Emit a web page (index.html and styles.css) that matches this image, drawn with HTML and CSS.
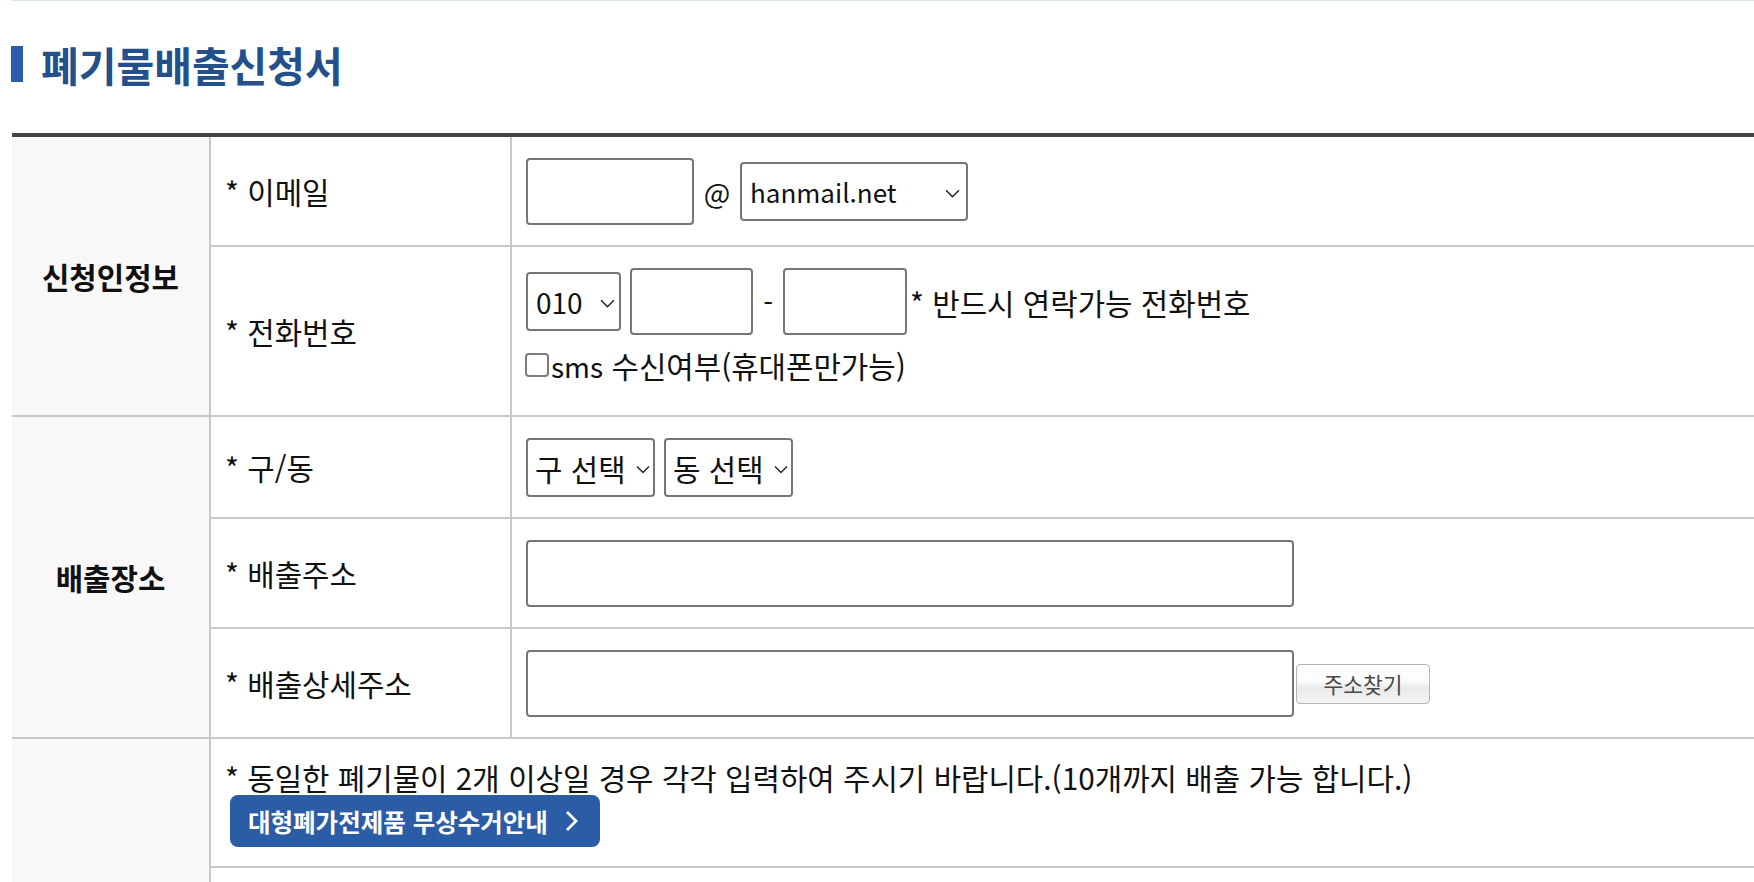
FILE: index.html
```html
<!DOCTYPE html>
<html lang="ko">
<head>
<meta charset="utf-8">
<title>폐기물배출신청서</title>
<link rel="stylesheet" href="styles.css">
</head>
<body>
<div class="page">
  <div class="topline"></div>
  <h2 class="title"><span class="bar"></span>폐기물배출신청서</h2>
  <table class="form">
    <colgroup><col class="c1"><col class="c2"><col></colgroup>
    <tr>
      <th rowspan="2" class="group">신청인정보</th>
      <th class="label">* 이메일</th>
      <td class="field">
        <div class="line">
          <input type="text" class="in email">
          <span class="at">@</span>
          <span class="sel mail"><select><option>hanmail.net</option></select><svg class="chev" viewBox="0 0 14 8"><path d="M1 1 L7 7 L13 1" fill="none" stroke="#222" stroke-width="1.4"/></svg></span>
        </div>
      </td>
    </tr>
    <tr>
      <th class="label">* 전화번호</th>
      <td class="field">
        <div class="line">
          <span class="sel n010"><select><option>010</option></select><svg class="chev" viewBox="0 0 14 8"><path d="M1 1 L7 7 L13 1" fill="none" stroke="#222" stroke-width="1.4"/></svg></span>
          <input type="text" class="in tel first">
          <span class="dash">-</span>
          <input type="text" class="in tel">
          <span class="note">* 반드시 연락가능 전화번호</span>
        </div>
        <div class="line sms">
          <input type="checkbox" class="chk">
          <span class="sms-text"><span class="latin">sms</span> 수신여부(휴대폰만가능)</span>
        </div>
      </td>
    </tr>
    <tr>
      <th rowspan="3" class="group">배출장소</th>
      <th class="label">* 구/동</th>
      <td class="field">
        <div class="line">
          <span class="sel area"><select><option>구 선택</option></select><svg class="chev" viewBox="0 0 14 8"><path d="M1 1 L7 7 L13 1" fill="none" stroke="#222" stroke-width="1.4"/></svg></span>
          <span class="sel area second"><select><option>동 선택</option></select><svg class="chev" viewBox="0 0 14 8"><path d="M1 1 L7 7 L13 1" fill="none" stroke="#222" stroke-width="1.4"/></svg></span>
        </div>
      </td>
    </tr>
    <tr>
      <th class="label">* 배출주소</th>
      <td class="field">
        <div class="line"><input type="text" class="in addr"></div>
      </td>
    </tr>
    <tr>
      <th class="label">* 배출상세주소</th>
      <td class="field">
        <div class="line">
          <input type="text" class="in addr">
          <button type="button" class="find">주소찾기</button>
        </div>
      </td>
    </tr>
    <tr>
      <th rowspan="2" class="group"></th>
      <td colspan="2" class="notice-cell">
        <div class="notice">* 동일한 폐기물이 2개 이상일 경우 각각 입력하여 주시기 바랍니다.(10개까지 배출 가능 합니다.)</div>
        <a class="guide" href="#">대형폐가전제품 무상수거안내<svg class="go" viewBox="0 0 16 22"><path d="M4 2 L13 11 L4 20" fill="none" stroke="#fff" stroke-width="2.8"/></svg></a>
      </td>
    </tr>
    <tr>
      <td colspan="2" class="empty"></td>
    </tr>
  </table>
</div>
</body>
</html>
```

FILE: styles.css
```css
* { box-sizing: border-box; }

body {
  margin: 0;
  background: #fff;
  color: #111;
  font-family: "Noto Sans CJK KR", "Noto Sans", sans-serif;
  overflow: hidden;
}

.page {
  padding-left: 11px;
}

.topline {
  height: 1px;
  background: #dbe5ee;
}

.title {
  display: flex;
  align-items: center;
  margin: 43px 0 0;
  height: 40px;
  font-size: 41px;
  line-height: 40px;
  font-weight: 700;
  color: #23508b;
}

.bar {
  width: 12px;
  height: 36px;
  background: #2a5ca8;
  margin-right: 18px;
}

.form {
  margin: 49px 0 0 1px;
  width: calc(100% - 1px);
  border-collapse: separate;
  border-spacing: 0;
  table-layout: fixed;
  border-top: 4px solid #444;
}

.form col.c1 { width: 199px; }
.form col.c2 { width: 301px; }

.form th,
.form td {
  padding: 0;
  border-bottom: 2px solid #c8c8c8;
  vertical-align: middle;
  font-size: 29.8px;
  color: #111;
}

.group {
  background: #f8f8f8;
  border-right: 2px solid #c8c8c8;
  font-weight: 700;
  text-align: center;
}

.label {
  border-right: 2px solid #c8c8c8;
  font-weight: 400;
  text-align: left;
  padding: 0 14px !important;
}

.field {
  padding: 21px 14px 20px !important;
}

.line {
  display: flex;
  align-items: center;
}

.in {
  height: 67px;
  margin: 0;
  padding: 0 8px;
  border: 2px solid #767676;
  border-radius: 4px;
  background: #fff;
  font-family: inherit;
  font-size: 28px;
}

.in.email { width: 168px; }
.in.tel { width: 124px; }
.in.tel.first { width: 123px; margin-left: 9px; }
.in.addr { width: 768px; }

.at {
  width: 46px;
  text-align: center;
  font-size: 28px;
}

.sel {
  position: relative;
  display: inline-flex;
}

.sel select {
  -webkit-appearance: none;
  appearance: none;
  height: 59px;
  margin: 0;
  padding: 0 0 0 8px;
  border: 2px solid #767676;
  border-radius: 4px;
  background: #fff;
  color: #111;
  font-family: inherit;
  font-size: 29.8px;
}

.sel .chev {
  position: absolute;
  top: 50%;
  right: 8px;
  width: 15px;
  height: 9px;
  margin-top: -3px;
  pointer-events: none;
}

.sel.mail select { width: 228px; font-size: 26px; }
.sel.n010 select { width: 95px; font-size: 28px; }
.sel.n010 .chev { right: 6px; }
.sel.area select { width: 129px; padding-left: 7px; }
.sel.area .chev { right: 5px; width: 14px; }
.sel.second { margin-left: 9px; }

.dash {
  width: 30px;
  text-align: center;
  font-size: 28px;
}

.note {
  margin-left: 3px;
  white-space: nowrap;
}

.line.sms {
  height: 60px;
}

.latin {
  font-size: 28px;
}

.chk {
  -webkit-appearance: none;
  appearance: none;
  flex: none;
  width: 24px;
  height: 24px;
  margin: 0 2px 0 -1px;
  border: 2px solid #7c7c7c;
  border-radius: 4px;
  background: #fff;
}

.find {
  width: 134px;
  height: 40px;
  margin-left: 2px;
  padding: 0;
  border: 1px solid #b4b4b4;
  border-radius: 4px;
  background: linear-gradient(#ffffff 0%, #fbfbfb 45%, #e9e9e9 60%, #f4f4f4 100%);
  color: #4a4a4a;
  font-family: inherit;
  font-size: 21.5px;
}

.notice-cell {
  padding: 20px 14px 19px !important;
}

.notice {
  line-height: 36px;
  white-space: nowrap;
}

.guide {
  display: flex;
  align-items: center;
  width: 370px;
  height: 52px;
  margin-left: 5px;
  padding-left: 18px;
  border-radius: 8px;
  background: #2b5ca6;
  color: #fff;
  font-size: 24.5px;
  font-weight: 700;
  text-decoration: none;
}

.guide .go {
  width: 16px;
  height: 22px;
  margin-left: 15px;
}

.empty {
  height: 60px;
}
```
